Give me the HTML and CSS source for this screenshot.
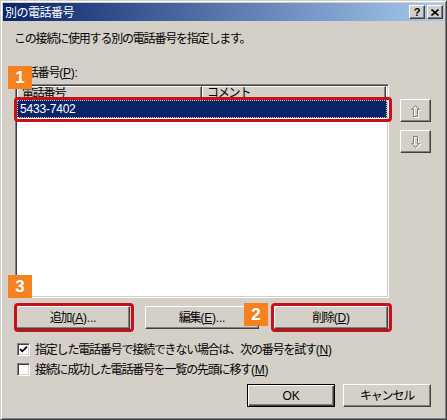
FILE: index.html
```html
<!DOCTYPE html>
<html lang="ja">
<head>
<meta charset="utf-8">
<title>別の電話番号</title>
<link rel="stylesheet" href="styles.css">
</head>
<body>
<div class="window">
  <div class="titlebar">
    <span class="title">別の電話番号</span>
    <div class="caps">
      <span class="cap cap-help">?</span>
      <span class="cap"><svg width="8" height="7" viewBox="0 0 8 7"><path d="M0.5 0.5 L7.5 6.5 M7.5 0.5 L0.5 6.5" stroke="#000" stroke-width="1.6"/></svg></span>
    </div>
  </div>
  <div class="content">
    <p class="desc">この接続に使用する別の電話番号を指定します。</p>
    <p class="label">電話番号<span class="lat">(<u>P</u>):</span></p>
    <div class="listrow">
      <div class="list">
        <div class="header">
          <div class="col c1">電話番号</div>
          <div class="col c2">コメント</div>
        </div>
        <div class="row sel"><span class="lat">5433-7402</span></div>
      </div>
      <div class="side">
        <span class="btn arrow">
          <svg width="11" height="14" viewBox="0 0 11 14">
            <path d="M5.5 1.5 L9.5 5.5 L7.5 5.5 L7.5 12.5 L3.5 12.5 L3.5 5.5 L1.5 5.5 Z" transform="translate(1 1)" fill="none" stroke="#fff"/>
            <path d="M5.5 1.5 L9.5 5.5 L7.5 5.5 L7.5 12.5 L3.5 12.5 L3.5 5.5 L1.5 5.5 Z" fill="none" stroke="#808080"/>
          </svg>
        </span>
        <span class="btn arrow">
          <svg width="11" height="14" viewBox="0 0 11 14">
            <path d="M5.5 12.5 L9.5 8.5 L7.5 8.5 L7.5 1.5 L3.5 1.5 L3.5 8.5 L1.5 8.5 Z" transform="translate(1 1)" fill="none" stroke="#fff"/>
            <path d="M5.5 12.5 L9.5 8.5 L7.5 8.5 L7.5 1.5 L3.5 1.5 L3.5 8.5 L1.5 8.5 Z" fill="none" stroke="#808080"/>
          </svg>
        </span>
      </div>
    </div>
    <div class="btnrow">
      <span class="btn wide">追加<span class="lat">(<u>A</u>)...</span></span>
      <span class="btn wide">編集<span class="lat">(<u>E</u>)...</span></span>
      <span class="btn wide">削除<span class="lat">(<u>D</u>)</span></span>
    </div>
    <div class="checks">
      <div class="check">
        <span class="box"><svg width="9" height="9" viewBox="0 0 9 9"><path d="M1 4 L3.3 6.3 L8 1.6" fill="none" stroke="#000" stroke-width="1.8"/></svg></span>
        <span>指定した電話番号で接続できない場合は、次の番号を試す<span class="lat">(<u>N</u>)</span></span>
      </div>
      <div class="check">
        <span class="box"></span>
        <span>接続に成功した電話番号を一覧の先頭に移す<span class="lat">(<u>M</u>)</span></span>
      </div>
    </div>
    <div class="okrow">
      <span class="btn ok default"><span class="lat">OK</span></span>
      <span class="btn ok">キャンセル</span>
    </div>
  </div>

  <div class="hl hl1"></div>
  <div class="hl hl2"></div>
  <div class="hl hl3"></div>
  <div class="badge b1">1</div>
  <div class="badge b2">2</div>
  <div class="badge b3">3</div>
</div>
</body>
</html>
```
FILE: styles.css
```css
body {
  margin: 0;
  background: #D4D0C8;
  font-family: "Liberation Sans", "Noto Sans CJK JP", sans-serif;
  font-size: 12px;
  color: #000;
}

.window {
  position: relative;
  width: 447px;
  height: 420px;
  box-sizing: border-box;
  border: 1px solid;
  border-color: #D4D0C8 #404040 #404040 #D4D0C8;
  box-shadow: inset 1px 1px #fff, inset -1px -1px #808080;
  padding: 2px;
  background: #D4D0C8;
  display: flex;
  flex-direction: column;
}

.titlebar {
  height: 18px;
  flex: none;
  background: linear-gradient(to right, #0A246A, #A6CAF0);
  display: flex;
  align-items: center;
  justify-content: space-between;
  padding: 0 1px 0 2px;
  color: #fff;
}

.title {
  font-family: "Noto Sans CJK JP", sans-serif;
  font-size: 12px;
  letter-spacing: -0.5px;
  line-height: 14px;
}

.caps {
  display: flex;
  gap: 2px;
}

.cap {
  width: 16px;
  height: 14px;
  box-sizing: border-box;
  background: #D4D0C8;
  border: 1px solid;
  border-color: #fff #404040 #404040 #fff;
  box-shadow: inset -1px -1px #808080;
  display: flex;
  align-items: center;
  justify-content: center;
  color: #000;
}

.cap-help {
  font-family: "Liberation Sans", sans-serif;
  font-weight: bold;
  font-size: 11px;
  line-height: 12px;
}

.content {
  padding: 11px 13px 0 11px;
  font-family: "Liberation Sans", "Noto Sans CJK JP", sans-serif;
  letter-spacing: -1.2px;
}

.lat {
  letter-spacing: -0.2px;
}

.desc {
  margin: 0;
  line-height: 14px;
  height: 14px;
}

.label {
  margin: 20px 0 0 2px;
  line-height: 14px;
  height: 14px;
}

.listrow {
  margin-top: 4px;
  display: flex;
  align-items: flex-start;
}

.list {
  margin-left: 1px;
  width: 374px;
  height: 214px;
  box-sizing: border-box;
  background: #fff;
  border: 1px solid;
  border-color: #808080 #fff #fff #808080;
  box-shadow: inset 1px 1px #404040, inset -1px -1px #D4D0C8;
  padding: 1px;
}

.header {
  display: flex;
  height: 14px;
}

.col {
  box-sizing: border-box;
  height: 14px;
  background: #D4D0C8;
  border: 1px solid;
  border-color: #fff #404040 #404040 #fff;
  box-shadow: inset -1px -1px #808080;
  padding-left: 4px;
  line-height: 12px;
  overflow: hidden;
}

.c1 { width: 185px; }
.c2 { width: 184px; }

.row {
  height: 18px;
  box-sizing: border-box;
  line-height: 16px;
  padding-left: 2px;
}

.sel {
  background: #0A246A;
  color: #fff;
  border: 1px dotted #d8d0a0;
}

.side {
  margin: 15px 0 0 11px;
  display: flex;
  flex-direction: column;
  gap: 8px;
}

.btn {
  box-sizing: border-box;
  background: #D4D0C8;
  border: 1px solid;
  border-color: #fff #404040 #404040 #fff;
  box-shadow: inset -1px -1px #808080;
  display: flex;
  align-items: center;
  justify-content: center;
  height: 23px;
  line-height: 14px;
}

.arrow {
  width: 31px;
}

.btnrow {
  margin: 8px 0 0 2px;
  display: flex;
  gap: 15px;
}

.wide {
  width: 114px;
}

.checks {
  margin: 14px 0 0 3px;
  display: flex;
  flex-direction: column;
  gap: 7px;
}

.check {
  display: flex;
  align-items: center;
  gap: 5px;
  height: 13px;
  line-height: 14px;
}

.box {
  width: 13px;
  height: 13px;
  box-sizing: border-box;
  background: #fff;
  border: 1px solid;
  border-color: #808080 #fff #fff #808080;
  box-shadow: inset 1px 1px #404040, inset -1px -1px #D4D0C8;
  padding: 1px;
  display: flex;
  align-items: center;
  justify-content: center;
}

.okrow {
  margin-top: 8px;
  display: flex;
  justify-content: flex-end;
  gap: 8px;
}

.ok {
  width: 88px;
}

.default {
  border: 1px solid #000;
  box-shadow: inset 1px 1px #fff, inset -1px -1px #404040, inset -2px -2px #808080;
}

u {
  text-decoration: underline;
  text-underline-offset: 1px;
}

.hl {
  position: absolute;
  box-sizing: border-box;
  border: 3px solid #C8101A;
  border-radius: 4px;
}

.hl1 { left: 13px; top: 96px; width: 378px; height: 25px; }
.hl2 { left: 13px; top: 302px; width: 120px; height: 29px; }
.hl3 { left: 270px; top: 302px; width: 121px; height: 29px; }

.badge {
  position: absolute;
  width: 24px;
  height: 23px;
  background: #F5821F;
  color: #fff;
  font-family: "Liberation Sans", sans-serif;
  font-weight: bold;
  font-size: 17px;
  line-height: 23px;
  text-align: center;
}

.b1 { left: 7px; top: 65px; }
.b2 { left: 243px; top: 302px; }
.b3 { left: 7px; top: 274px; }
```
